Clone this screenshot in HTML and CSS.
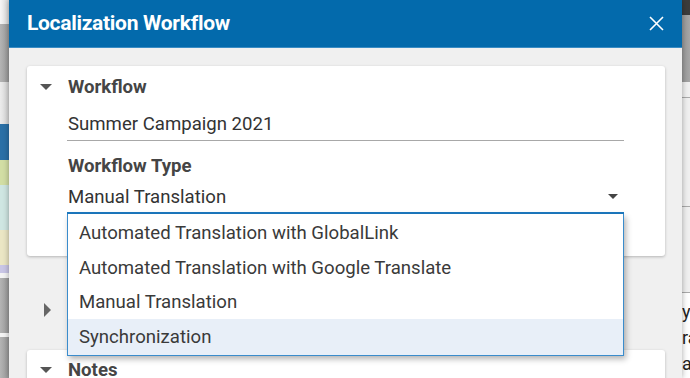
FILE: index.html
```html
<!DOCTYPE html>
<html lang="en">
<head>
    <meta charset="UTF-8">
    <title>Localization Workflow</title>
    <link rel="stylesheet" href="styles.css">
</head>
<body>
    <!-- page behind the dialog, left edge -->
    <div class="edge-left">
        <div class="blk fade"></div>
        <div class="blk gray h58"></div>
        <div class="blk light h42"></div>
        <div class="blk blue h36"></div>
        <div class="blk green h25"></div>
        <div class="blk teal h45"></div>
        <div class="blk beige h35"></div>
        <div class="blk lilac h8"></div>
        <div class="blk white h5"></div>
        <div class="blk gray h55"></div>
        <div class="blk white h4"></div>
        <div class="blk gray h60"></div>
    </div>

    <div class="dialog">
        <div class="dialog-header">
            <h1>Localization Workflow</h1>
            <span class="close">
                <svg width="15" height="15" viewBox="0 0 15 15"><path d="M1 1L14 14M14 1L1 14" stroke="#fff" stroke-width="1.6"/></svg>
            </span>
        </div>
        <div class="dialog-body">
            <div class="card">
                <div class="card-title"><span class="caret-down"></span>Workflow</div>
                <div class="field">
                    <div class="field-value">Summer Campaign 2021</div>
                </div>
                <div class="field-label">Workflow Type</div>
                <div class="field select">
                    <div class="field-value">Manual Translation</div>
                    <span class="select-arrow"></span>
                    <ul class="options">
                        <li>Automated Translation with GlobalLink</li>
                        <li>Automated Translation with Google Translate</li>
                        <li>Manual Translation</li>
                        <li class="hover">Synchronization</li>
                    </ul>
                </div>
            </div>
            <div class="collapsed"><span class="caret-right"></span></div>
            <div class="card notes">
                <div class="card-title"><span class="caret-down"></span>Notes</div>
            </div>
        </div>
    </div>

    <!-- page behind the dialog, right edge -->
    <div class="edge-right">
        <div class="r-dark"></div>
        <div class="r-gray"></div>
        <div class="r-light h15"></div>
        <div class="r-light h108 line"></div>
        <div class="r-light h85 line"></div>
        <div class="r-text line">y:<br>ra<br>ak</div>
    </div>
</body>
</html>
```

FILE: styles.css
```css
body {
    margin: 0;
    width: 690px;
    height: 378px;
    overflow: hidden;
    display: flex;
    font-family: Roboto, "Liberation Sans", sans-serif;
    background: #f0f0f0;
}

/* left edge */
.edge-left {
    width: 9px;
    flex: none;
    display: flex;
    flex-direction: column;
}
.blk { flex: none; }
.fade { height: 24px; background: linear-gradient(to right, #f6f6f6, #d8d8d8); }
.gray { background: linear-gradient(to right, #b4b4b4, #999); }
.light { background: linear-gradient(to right, #ececec, #d4d4d4); }
.blue { background: #2b70a6; }
.green { background: #d2dea4; }
.teal { background: #cfe6e2; }
.beige { background: #ebe6c4; }
.lilac { background: #c9c6e6; }
.white { background: #f4f4f4; }
.h58 { height: 58px; }
.h42 { height: 42px; }
.h36 { height: 36px; }
.h25 { height: 25px; }
.h45 { height: 45px; }
.h35 { height: 35px; }
.h8 { height: 8px; }
.h5 { height: 5px; }
.h55 { height: 55px; }
.h4 { height: 4px; }
.h60 { height: 60px; }

/* dialog */
.dialog {
    width: 673px;
    flex: none;
    display: flex;
    flex-direction: column;
    background: #f0f0f0;
    box-shadow: 0 0 6px rgba(0,0,0,0.35);
    position: relative;
    z-index: 1;
}
.dialog-header {
    height: 47px;
    background: #036aac;
    border-bottom: 1px solid #3a8cc4;
    display: flex;
    align-items: center;
    justify-content: space-between;
    padding: 0 18px 0 18px;
    flex: none;
}
.dialog-header h1 {
    margin: 0;
    color: #fff;
    font-size: 21px;
    font-weight: bold;
    letter-spacing: -0.3px;
    padding-bottom: 1px;
}
.close {
    display: flex;
    padding-bottom: 1px;
}
.dialog-body {
    padding: 18px 17px 0 18px;
}
.card {
    background: #fff;
    border-radius: 3px;
    box-shadow: 0 1px 3px rgba(0,0,0,0.25);
    padding: 11px 41px 0 40px;
    height: 179px;
    position: relative;
}
.card-title {
    font-size: 18.6px;
    font-weight: bold;
    color: #454545;
    position: relative;
    height: 20px;
    line-height: 20px;
    padding-left: 1px;
}
.caret-down {
    position: absolute;
    left: -27px;
    top: 7px;
    border-left: 6px solid transparent;
    border-right: 6px solid transparent;
    border-top: 6px solid #555;
}
.caret-right {
    position: absolute;
    left: 17px;
    top: 47px;
    border-top: 7px solid transparent;
    border-bottom: 7px solid transparent;
    border-left: 7px solid #666;
}
.field {
    margin-top: 16px;
    border-bottom: 1px solid #a8a8a8;
    padding-bottom: 5px;
    position: relative;
}
.field-value {
    font-size: 18.6px;
    color: #333;
    line-height: 22px;
    padding-left: 1px;
}
.field-label {
    margin-top: 14px;
    font-size: 18.6px;
    font-weight: bold;
    color: #454545;
    line-height: 22px;
    padding-left: 1px;
}
.select {
    margin-top: 9px;
    padding-bottom: 4px;
    border-bottom: 2px solid #1c79c0;
}
.select-arrow {
    position: absolute;
    right: 6px;
    top: 8px;
    border-left: 5px solid transparent;
    border-right: 5px solid transparent;
    border-top: 5px solid #444;
}
.options {
    list-style: none;
    margin: 0;
    padding: 1px 0 0 0;
    position: absolute;
    left: 0;
    right: 0;
    top: 28px;
    background: #fff;
    border: 1px solid #3a8ccc;
    border-top: none;
    box-shadow: 2px 3px 6px rgba(0,0,0,0.3);
    z-index: 2;
}
.options li {
    height: 34.7px;
    line-height: 36px;
    padding-left: 11px;
    font-size: 18.6px;
    color: #3a3a3a;
}
.options li.hover {
    background: #e8eff8;
    height: 35.7px;
}
.collapsed {
    height: 94px;
    position: relative;
}
.notes {
    height: 30px;
    padding-top: 10px;
}

/* right edge */
.edge-right {
    flex: 1;
    display: flex;
    flex-direction: column;
    background: #f2f2f2;
}
.r-dark { height: 15px; background: #3c3c3c; }
.r-gray { height: 67px; background: linear-gradient(to right, #999, #b8b8b8); }
.r-light { background: #f0f0f0; }
.h15 { height: 15px; }
.h108 { height: 108px; }
.h85 { height: 85px; }
.line { border-top: 1px solid #aaa; }
.r-text {
    flex: 1;
    background: #fff;
    font-size: 18px;
    line-height: 26px;
    color: #222;
    padding: 6px 0 0 0;
    overflow: hidden;
    white-space: nowrap;
}
```
